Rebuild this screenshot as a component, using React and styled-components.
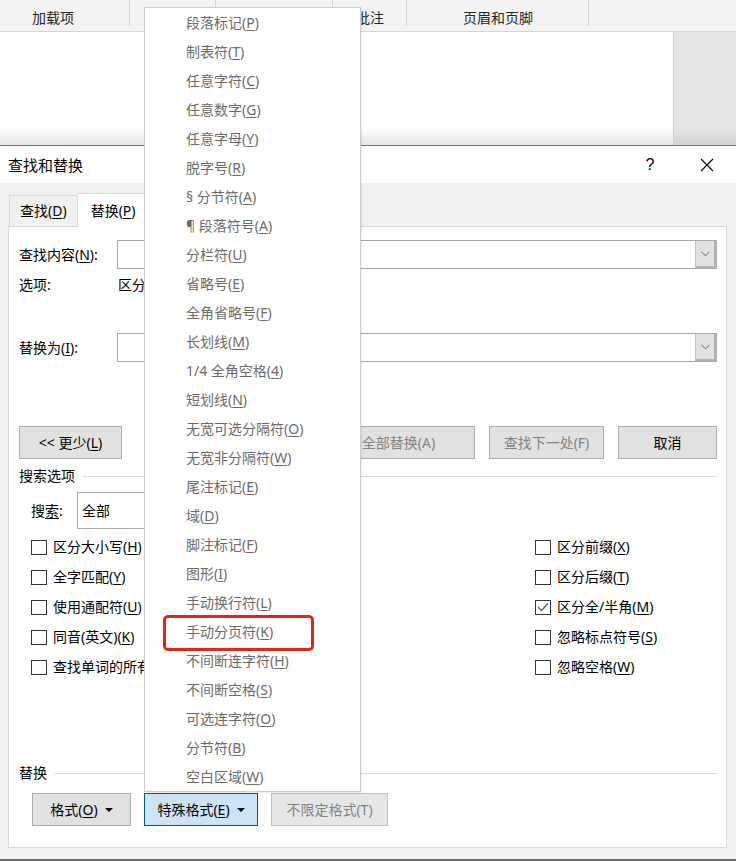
import React from "react"
import styled, { createGlobalStyle, css } from "styled-components"

const GlobalStyle = createGlobalStyle`
  html, body {
    margin: 0;
    padding: 0;
    background: #fff;
  }
  body {
    font-family: "Noto Sans", "Noto Sans CJK SC", sans-serif;
    font-size: 14px;
    line-height: 20px;
    color: #000;
    overflow: hidden;
  }
  * {
    box-sizing: border-box;
  }
`

const Page = styled.div`
  position: relative;
  width: 736px;
  height: 861px;
  overflow: hidden;
  display: flex;
  flex-direction: column;
`

/* ---------- ribbon behind the dialog ---------- */

const Ribbon = styled.div`
  height: 32px;
  flex: none;
  display: flex;
  background: #f3f3f3;
  border-bottom: 1px solid #d5d5d5;
`

const RibbonCell = styled.div`
  position: relative;
  width: ${p => p.$width}px;
  flex: none;
  display: flex;
  justify-content: ${p => (p.$pad ? "flex-start" : "center")};
  padding-left: ${p => p.$pad || 0}px;
  padding-top: 8px;
  color: #262626;

  ${p =>
    !p.$last &&
    css`
      &::after {
        content: "";
        position: absolute;
        right: 0;
        top: 0;
        width: 1px;
        height: 26px;
        background: #d2d2d2;
      }
    `}
`

const DocArea = styled.div`
  height: 113px;
  flex: none;
  display: flex;
`

const DocPage = styled.div`
  flex: 1;
  background: linear-gradient(to bottom, #fff 0, #fff 96px, #e6e6e6 113px);
`

const DocSide = styled.div`
  width: 63px;
  border-left: 1px solid #cfcfcf;
  background: linear-gradient(to bottom, #e6e6e6 0, #e6e6e6 96px, #d2d2d2 113px);
`

/* ---------- dialog ---------- */

const Dialog = styled.div`
  flex: 1;
  display: flex;
  flex-direction: column;
  background: #f0f0f0;
  border-top: 1px solid #707070;
  border-bottom: 2px solid #6b6b6b;
`

const TitleBar = styled.div`
  height: 37px;
  flex: none;
  display: flex;
  align-items: center;
  padding-left: 8px;
  padding-right: 6px;
  background: #fff;
  font-size: 15px;
`

const TitleButtons = styled.div`
  margin-left: auto;
  display: flex;
  gap: 11px;
`

const TitleButton = styled.div`
  width: 46px;
  height: 30px;
  display: flex;
  align-items: center;
  justify-content: center;
  font-size: 16px;
  font-family: "Liberation Sans", "Noto Sans", sans-serif;
`

const DialogBody = styled.div`
  flex: 1;
  padding: 10px 9px 0 8px;
  display: flex;
  flex-direction: column;
`

const TabBar = styled.div`
  height: 33px;
  display: flex;
  align-items: flex-end;
  padding-left: 1px;
`

const Tab = styled.div`
  position: relative;
  display: flex;
  align-items: center;
  height: ${p => (p.$active ? 34 : 31)}px;
  padding: 0 ${p => (p.$active ? 12 : 10)}px 0 ${p => (p.$active ? 13 : 10)}px;
  margin-bottom: ${p => (p.$active ? -1 : 0)}px;
  border: 1px solid #d9d9d9;
  border-bottom: none;
  background: ${p => (p.$active ? "#fff" : "#f0f0f0")};
  z-index: ${p => (p.$active ? 1 : 0)};
  ${p => p.$active && css`border-left: none;`}
`

const Panel = styled.div`
  background: #fff;
  border: 1px solid #d9d9d9;
  padding: 13px 9px 21px 10px;
  display: flex;
  flex-direction: column;
`

const Key = styled.span`
  text-decoration: underline;
  text-underline-offset: 2px;
  text-decoration-thickness: 1px;
`

const Row = styled.div`
  display: flex;
  align-items: center;
  margin-top: ${p => p.$top || 0}px;
`

const FieldLabel = styled.div`
  width: ${p => p.$width}px;
  flex: none;
`

/* text that runs under the open menu is cut at the menu edge */
const Clipped = styled.span`
  display: inline-block;
  max-width: ${p => p.$width}px;
  overflow: hidden;
  white-space: nowrap;
  vertical-align: top;
`

const Combo = styled.div`
  width: 600px;
  height: 29px;
  display: flex;
  border: 1px solid #a8a8a8;
  background: #fff;
`

const ComboArrow = styled.div`
  width: 21px;
  margin-left: auto;
  display: flex;
  align-items: center;
  justify-content: center;
  background: #e1e1e1;
  border-left: 1px solid #c2c2c2;
  border-right: 2px solid #b4b4b4;
  border-bottom: 2px solid #b4b4b4;
`

const Button = styled.div`
  width: ${p => p.$width}px;
  height: 33px;
  flex: none;
  display: flex;
  align-items: center;
  justify-content: center;
  white-space: nowrap;
  border: 1px solid ${p => (p.$active ? "#005499" : p.$faint ? "#bfbfbf" : "#adadad")};
  background: ${p => (p.$active ? "#cce4f7" : p.$faint ? "#e6e6e6" : "#e1e1e1")};
  color: ${p => (p.$disabled ? "#838383" : "#000")};
`

const ButtonGroup = styled.div`
  display: flex;
  gap: ${p => p.$gap}px;
  margin-left: ${p => (p.$auto ? "auto" : "0")};
  padding-left: ${p => p.$pad || 0}px;
`

const Caret = styled.span`
  width: 0;
  height: 0;
  margin-left: 7px;
  border-left: 4px solid transparent;
  border-right: 4px solid transparent;
  border-top: 4px solid #000;
`

const Heading = styled.div`
  display: flex;
  align-items: center;
  margin-top: ${p => p.$top}px;
  height: 20px;
`

const Rule = styled.div`
  flex: 1;
  height: 1px;
  margin-left: 7px;
  background: #dcdcdc;
`

const SearchRow = styled.div`
  display: flex;
  align-items: center;
  margin-top: 6px;
  padding-left: 12px;
`

const SelectBox = styled.div`
  width: 170px;
  height: 37px;
  display: flex;
  align-items: center;
  padding-left: 4px;
  border: 1px solid #ababab;
`

const CheckGrid = styled.div`
  display: grid;
  grid-template-columns: 504px 1fr;
  grid-template-rows: repeat(5, 30px);
  grid-auto-flow: column;
  margin-top: 3px;
  padding-left: 12px;
`

const CheckRow = styled.div`
  display: flex;
  align-items: center;
  gap: 6px;
  white-space: nowrap;
`

const Box = styled.div`
  width: 16px;
  height: 15px;
  flex: none;
  border: 1px solid #333;
  display: flex;
  align-items: center;
  justify-content: center;
`

/* ---------- special format menu ---------- */

const Menu = styled.div`
  position: absolute;
  left: 144px;
  top: 7px;
  width: 217px;
  background: #fff;
  border: 1px solid #cccccc;
  box-shadow: 1px 1px 2px rgba(0, 0, 0, 0.08);
  z-index: 10;
`

const MenuItem = styled.div`
  position: relative;
  height: 29px;
  display: flex;
  align-items: center;
  padding-left: 41px;
  color: #6b6b6b;
  white-space: nowrap;

  ${p =>
    p.$marked &&
    css`
      &::before {
        content: "";
        position: absolute;
        left: 18px;
        top: -2px;
        width: 145px;
        height: 30px;
        border: 3px solid #e3241f;
        border-radius: 5px;
      }
    `}
`

const menuItems = [
  ["段落标记(", "P", ")"],
  ["制表符(", "T", ")"],
  ["任意字符(", "C", ")"],
  ["任意数字(", "G", ")"],
  ["任意字母(", "Y", ")"],
  ["脱字号(", "R", ")"],
  ["§ 分节符(", "A", ")"],
  ["¶ 段落符号(", "A", ")"],
  ["分栏符(", "U", ")"],
  ["省略号(", "E", ")"],
  ["全角省略号(", "F", ")"],
  ["长划线(", "M", ")"],
  ["1/4 全角空格(", "4", ")"],
  ["短划线(", "N", ")"],
  ["无宽可选分隔符(", "O", ")"],
  ["无宽非分隔符(", "W", ")"],
  ["尾注标记(", "E", ")"],
  ["域(", "D", ")"],
  ["脚注标记(", "F", ")"],
  ["图形(", "I", ")"],
  ["手动换行符(", "L", ")"],
  ["手动分页符(", "K", ")"],
  ["不间断连字符(", "H", ")"],
  ["不间断空格(", "S", ")"],
  ["可选连字符(", "O", ")"],
  ["分节符(", "B", ")"],
  ["空白区域(", "W", ")"],
]

const leftChecks = [
  ["区分大小写(", "H", ")"],
  ["全字匹配(", "Y", ")"],
  ["使用通配符(", "U", ")"],
  ["同音(英文)(", "K", ")"],
  ["查找单词的所有形式(英文)(", "W", ")"],
]

const rightChecks = [
  ["区分前缀(", "X", ")", false],
  ["区分后缀(", "T", ")", false],
  ["区分全/半角(", "M", ")", true],
  ["忽略标点符号(", "S", ")", false],
  ["忽略空格(", "W", ")", false],
]

const Label = ({ parts }) => (
  <span>
    {parts[0]}
    <Key>{parts[1]}</Key>
    {parts[2]}
  </span>
)

const Chevron = () => (
  <svg width="9" height="6" viewBox="0 0 9 6">
    <polyline points="0.5,0.8 4.5,4.8 8.5,0.8" fill="none" stroke="#606060" strokeWidth="1" />
  </svg>
)

const Check = ({ parts, checked, clip }) => (
  <CheckRow>
    <Box>
      {checked && (
        <svg width="12" height="10" viewBox="0 0 12 10">
          <polyline points="1,5 4.5,8.5 11,1.5" fill="none" stroke="#5a5a5a" strokeWidth="1.3" />
        </svg>
      )}
    </Box>
    {clip ? (
      <Clipped $width={clip}>
        <Label parts={parts} />
      </Clipped>
    ) : (
      <Label parts={parts} />
    )}
  </CheckRow>
)

const App = () => {
  return (
    <Page>
      <GlobalStyle />

      <Ribbon>
        <RibbonCell $width={130} $pad={32}>加载项</RibbonCell>
        <RibbonCell $width={86} />
        <RibbonCell $width={117} />
        <RibbonCell $width={74}>批注</RibbonCell>
        <RibbonCell $width={182}>页眉和页脚</RibbonCell>
        <RibbonCell $width={147} $last />
      </Ribbon>

      <DocArea>
        <DocPage />
        <DocSide />
      </DocArea>

      <Dialog>
        <TitleBar>
          查找和替换
          <TitleButtons>
            <TitleButton>?</TitleButton>
            <TitleButton>
              <svg width="14" height="14" viewBox="0 0 14 14">
                <path d="M1 1 L13 13 M13 1 L1 13" stroke="#000" strokeWidth="1.1" />
              </svg>
            </TitleButton>
          </TitleButtons>
        </TitleBar>

        <DialogBody>
          <TabBar>
            <Tab>
              <Label parts={["查找(", "D", ")"]} />
            </Tab>
            <Tab $active>
              <Label parts={["替换(", "P", ")"]} />
            </Tab>
          </TabBar>

          <Panel>
            <Row>
              <FieldLabel $width={98}>
                <Label parts={["查找内容(", "N", "):"]} />
              </FieldLabel>
              <Combo>
                <ComboArrow>
                  <Chevron />
                </ComboArrow>
              </Combo>
            </Row>

            <Row $top={6}>
              <FieldLabel $width={99}>选项:</FieldLabel>
              <Clipped $width={26}>区分全/半角</Clipped>
            </Row>

            <Row $top={38}>
              <FieldLabel $width={98}>
                <Label parts={["替换为(", "I", "):"]} />
              </FieldLabel>
              <Combo>
                <ComboArrow>
                  <Chevron />
                </ComboArrow>
              </Combo>
            </Row>

            <Row $top={64}>
              <Button $width={103}>
                &lt;&lt; 更少(<Key>L</Key>)
              </Button>
              <ButtonGroup $auto $gap={14}>
                <Button $width={103} />
                <Button $width={153} $disabled>
                  全部替换(A)
                </Button>
                <Button $width={115} $disabled>
                  查找下一处(F)
                </Button>
                <Button $width={99}>取消</Button>
              </ButtonGroup>
            </Row>

            <Heading $top={7}>
              搜索选项
              <Rule />
            </Heading>

            <SearchRow>
              <FieldLabel $width={46}>
                搜<Key>索</Key>:
              </FieldLabel>
              <SelectBox>全部</SelectBox>
            </SearchRow>

            <CheckGrid>
              {leftChecks.map((c, i) => (
                <Check key={"l" + i} parts={c} clip={91} />
              ))}
              {rightChecks.map((c, i) => (
                <Check key={"r" + i} parts={c} checked={c[3]} />
              ))}
            </CheckGrid>

            <Heading $top={81}>
              替换
              <Rule />
            </Heading>

            <Row $top={10}>
              <ButtonGroup $gap={13} $pad={13}>
                <Button $width={99}>
                  格式(<Key>O</Key>)<Caret />
                </Button>
                <Button $width={114} $active>
                  特殊格式(<Key>E</Key>)<Caret />
                </Button>
                <Button $width={117} $disabled $faint>
                  不限定格式(T)
                </Button>
              </ButtonGroup>
            </Row>
          </Panel>
        </DialogBody>
      </Dialog>

      <Menu>
        {menuItems.map((m, i) => (
          <MenuItem key={i} $marked={i === 21}>
            <Label parts={m} />
          </MenuItem>
        ))}
      </Menu>
    </Page>
  )
}

export default App
